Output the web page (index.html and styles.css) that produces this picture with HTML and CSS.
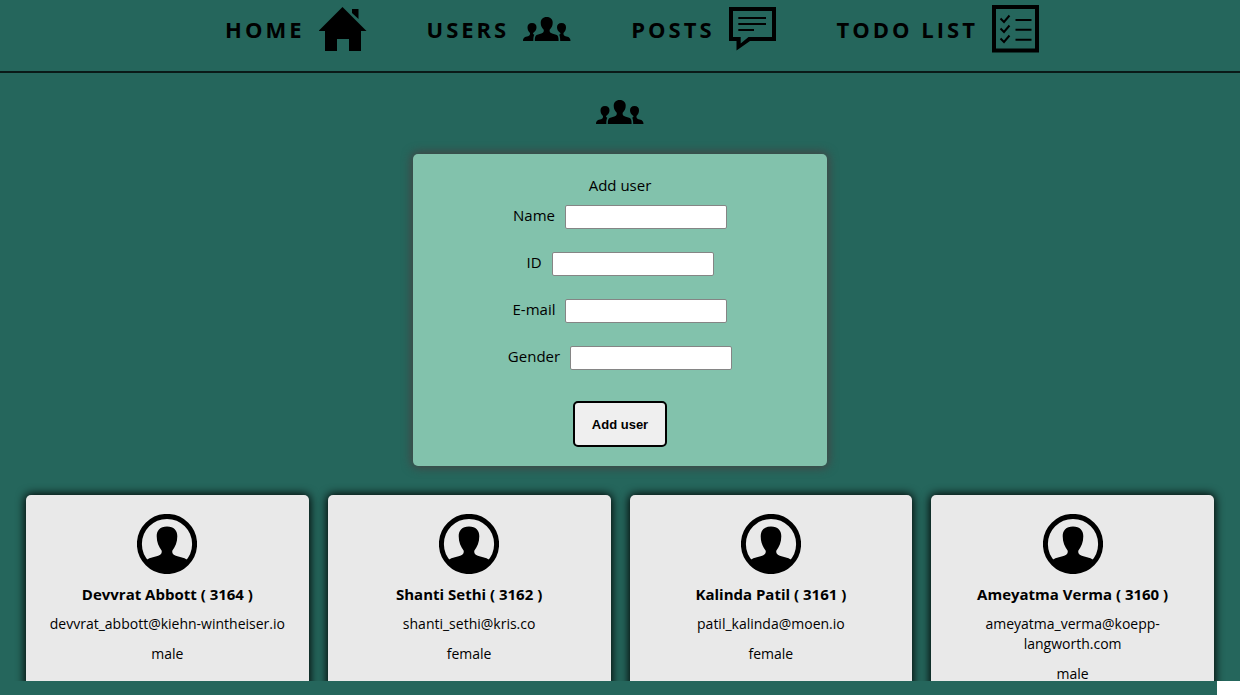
FILE: index.html
```html
<!DOCTYPE html>
<html lang="en">
<head>
<meta charset="utf-8">
<title>Users</title>
<link rel="stylesheet" href="styles.css">
</head>
<body>
<svg class="sprite" aria-hidden="true">
  <symbol id="home" viewBox="0 0 48 48">
    <path d="M23.5 2 47.500 26H42V46H30V34H18V46H6V26H-.5ZM33 4h6.500v10L33 8Z"/>
  </symbol>
  <symbol id="group" viewBox="0 0 48 48">
    <path d="M23.700 12c-4 0-6 2.500-6 5.800 0 3.200 1.300 5.200 3 7 .3 1.500-.1 2.400-.9 3-1.800 1.100-4.300 1.300-6.200 2.300-1.400.8-1.800 2.400-1.800 5.900h23.800c0-3.500-.4-5.100-1.800-5.900-1.900-1-4.400-1.200-6.200-2.300-.8-.6-1.200-1.500-.9-3 1.700-1.800 3-3.800 3-7 0-3.300-2-5.800-6-5.800Z"/>
    <path d="M9 18c-3 0-4.500 1.800-4.500 4.300 0 2.300.9 4.200 2.500 5.700.1 1.600-.2 2.300-1 2.800C3.500 32 0 31.500 0 36h10.300c0-3.300.3-5 1-6.300-1.300-.4-1.300-1-1.200-1.700 2.200-1.500 3.400-3.400 3.400-5.700C13.500 19.800 12 18 9 18Z"/>
    <path d="M38.500 18c3 0 4.500 1.800 4.500 4.300 0 2.300-.9 4.200-2.500 5.700-.1 1.600.2 2.300 1 2.800 2.500 1.200 6 .7 6 5.200H37.200c0-3.300-.3-5-1-6.300 1.300-.4 1.300-1 1.200-1.700-2.200-1.500-3.400-3.400-3.400-5.700 0-2.500 1.500-4.300 4.500-4.300Z"/>
  </symbol>
  <symbol id="posts" viewBox="0 0 48 48">
    <path fill-rule="evenodd" d="M0 2H47V36H21L7.500 45.500V36H0ZM4 6V32H11.700V38.500L19.500 32H43V6Z"/>
    <path class="line" d="M9.300 13H37M9.300 19H37M9.300 25H25"/>
  </symbol>
  <symbol id="todo" viewBox="0 0 48 48">
    <path fill-rule="evenodd" d="M0 0H47V47.500H0ZM4 4V43.500H43V4Z"/>
    <path class="line" d="m8.500 13.500 3.500 3.500 5.500-6.500m-9 13 3.500 3.500 5.500-6.500m-9 13 3.500 3.500 5.500-6.500M23.500 15h16M23.500 24.700h16M23.500 34.700h16"/>
  </symbol>
  <symbol id="avatar" viewBox="0 0 60 60">
    <circle class="ring" cx="30" cy="30" r="27.600"/>
    <path d="M30 12.500c-7 0-10.300 4-10.300 9.800 0 6 2 10.500 5 14.400.3 1.900-.3 3.300-2 4.200-3.800 2-9.700 2-13.500 5.200C14 53 21 59 30 59s16-6 20.800-12.900c-3.800-3.200-9.700-3.200-13.500-5.200-1.700-.9-2.300-2.300-2-4.200 3-3.900 5-8.400 5-14.400 0-5.800-3.300-9.800-10.300-9.800Z"/>
  </symbol>
</svg>

<header class="header">
  <nav class="nav" aria-label="Main">
    <a class="nav-link" href="#home">HOME <svg class="icon" aria-hidden="true"><use href="#home"/></svg></a>
    <a class="nav-link" href="#users">USERS <svg class="icon" aria-hidden="true"><use href="#group"/></svg></a>
    <a class="nav-link" href="#posts">POSTS <svg class="icon" aria-hidden="true"><use href="#posts"/></svg></a>
    <a class="nav-link" href="#todo">TODO LIST <svg class="icon" aria-hidden="true"><use href="#todo"/></svg></a>
  </nav>
</header>

<main class="content">
  <svg class="icon" role="img" aria-label="Users"><use href="#group"/></svg>

  <form class="user-form">
    <p class="form-title">Add user</p>
    <div class="fields">
      <div class="field"><label for="name">Name</label><input class="input" id="name" type="text"></div>
      <div class="field"><label for="id">ID</label><input class="input" id="id" type="text"></div>
      <div class="field"><label for="email">E-mail</label><input class="input" id="email" type="email"></div>
      <div class="field"><label for="gender">Gender</label><input class="input" id="gender" type="text"></div>
    </div>
    <button class="submit" type="button">Add user</button>
  </form>

  <section class="cards" aria-label="User list">
    <article class="card">
      <svg class="avatar" aria-hidden="true"><use href="#avatar"/></svg>
      <h2 class="card-name">Devvrat Abbott ( 3164 )</h2>
      <p class="card-text">devvrat_abbott@kiehn-wintheiser.io</p>
      <p class="card-text">male</p>
    </article>
    <article class="card">
      <svg class="avatar" aria-hidden="true"><use href="#avatar"/></svg>
      <h2 class="card-name">Shanti Sethi ( 3162 )</h2>
      <p class="card-text">shanti_sethi@kris.co</p>
      <p class="card-text">female</p>
    </article>
    <article class="card">
      <svg class="avatar" aria-hidden="true"><use href="#avatar"/></svg>
      <h2 class="card-name">Kalinda Patil ( 3161 )</h2>
      <p class="card-text">patil_kalinda@moen.io</p>
      <p class="card-text">female</p>
    </article>
    <article class="card">
      <svg class="avatar" aria-hidden="true"><use href="#avatar"/></svg>
      <h2 class="card-name">Ameyatma Verma ( 3160 )</h2>
      <p class="card-text">ameyatma_verma@koepp-langworth.com</p>
      <p class="card-text">male</p>
    </article>
  </section>
</main>

<div class="bottom-bar"><span class="corner"></span></div>
</body>
</html>
```

FILE: styles.css
```css
* {
  box-sizing: border-box;
}

body {
  display: flex;
  flex-direction: column;
  height: 100vh;
  margin: 0;
  background: #25665c;
  color: #000;
  font: 15px/20px "Open Sans", "Noto Sans", sans-serif;
}

h2,
p {
  margin: 0;
}

.sprite {
  position: absolute;
  width: 0;
  height: 0;
}

.icon {
  flex: none;
  width: 48px;
  height: 48px;
}

.line {
  fill: none;
  stroke: #000;
  stroke-width: 2;
}

.ring {
  fill: none;
  stroke: #000;
  stroke-width: 5;
}

.header {
  flex: none;
  padding: 5px 0 18px 25px;
  border-bottom: 2px solid #0a1a18;
}

.nav {
  display: flex;
  justify-content: center;
  gap: 60px;
}

.nav-link {
  display: flex;
  align-items: center;
  gap: 14px;
  color: #000;
  font-size: 22px;
  font-weight: 700;
  letter-spacing: 3px;
  text-decoration: none;
}

.content {
  display: flex;
  flex: 1;
  flex-direction: column;
  align-items: center;
  min-height: 0;
  padding-top: 15px;
  overflow: auto;
  scrollbar-width: none;
}

.user-form {
  display: flex;
  flex: none;
  flex-direction: column;
  align-items: center;
  width: 33.4%;
  margin-top: 18px;
  padding: 21px 16px 19px;
  border-radius: 5px;
  background: #82c2ac;
  box-shadow: 0 0 10px 2px #444;
}

.fields {
  display: flex;
  flex-direction: column;
  align-items: center;
  gap: 23px;
  margin: 10px 0 31px;
}

.field {
  display: flex;
  align-items: flex-start;
  gap: 10px;
}

.input {
  width: 162px;
  height: 24px;
  border: 1px solid #858585;
  border-radius: 2px;
  background: #fff;
}

.submit {
  height: 46px;
  padding: 0 17px;
  border: 2px solid #000;
  border-radius: 5px;
  background: #efefef;
  color: #000;
  font: 700 13px "Liberation Sans", Arial, sans-serif;
}

.cards {
  display: grid;
  grid-template-columns: repeat(4, 1fr);
  gap: 19px;
  align-self: stretch;
  margin-top: 29px;
  padding: 0 26px 20px;
}

.card {
  display: flex;
  flex-direction: column;
  align-items: center;
  gap: 10px;
  padding: 19px 16px;
  border-radius: 5px;
  background: #e9e9e9;
  box-shadow: 0 0 10px 1px #000;
  text-align: center;
}

.avatar {
  width: 60px;
  height: 60px;
}

.card-name {
  font-size: 15px;
  line-height: 20px;
}

.card-text {
  font-size: 14px;
}

.bottom-bar {
  display: flex;
  flex: none;
  justify-content: flex-end;
  height: 14px;
}

.corner {
  width: 23px;
  background: #fff;
}
```
